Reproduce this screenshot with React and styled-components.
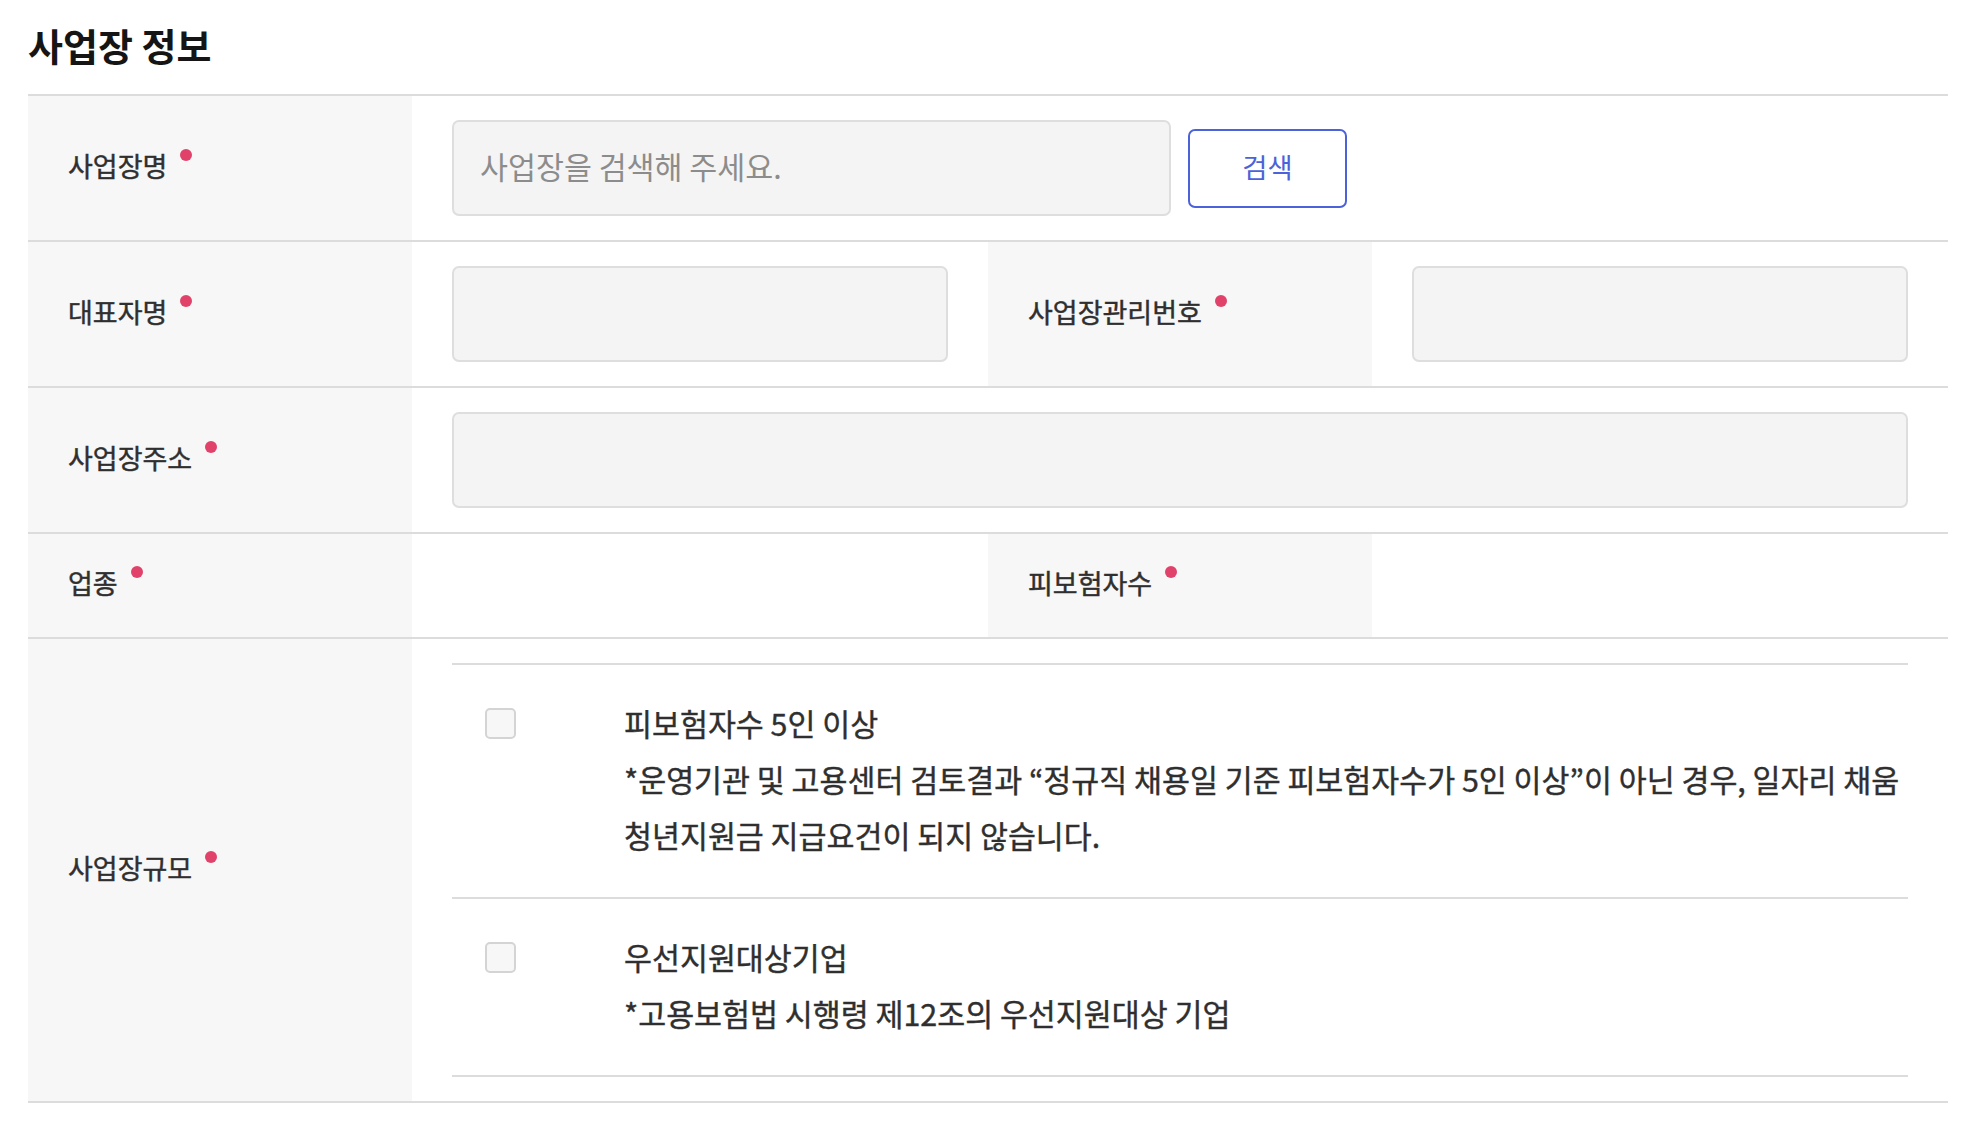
import React from "react";
import styled, { createGlobalStyle } from "styled-components";

const GlobalStyle = createGlobalStyle`
  * { box-sizing: border-box; }
  html, body { margin: 0; padding: 0; background: #ffffff; }
  body {
    font-family: "Noto Sans CJK KR", "Noto Sans", sans-serif;
    color: #333333;
    -webkit-font-smoothing: antialiased;
  }
`;

const Page = styled.div`
  padding: 0 22px 0 28px;
`;

const Title = styled.h2`
  margin: 0;
  padding-top: 21px;
  margin-bottom: 25px;
  font-size: 38px;
  line-height: 48px;
  font-weight: 700;
  color: #151515;
`;

const Table = styled.div`
  border-top: 2px solid #dcdcdc;
`;

const Row = styled.div`
  display: grid;
  grid-template-columns: 384px 1fr 384px 1fr;
  border-bottom: 2px solid #dcdcdc;
`;

const LabelCell = styled.div`
  background: #f7f7f7;
  padding: 29px 40px 35px;
  display: flex;
  align-items: center;
`;

const LabelText = styled.span`
  display: inline-flex;
  align-items: flex-start;
  font-size: 27px;
  line-height: 39px;
  font-weight: 400;
  color: #2f2f2f;
  -webkit-text-stroke: 0.45px #2f2f2f;
`;

const Required = styled.span`
  width: 12px;
  height: 12px;
  border-radius: 50%;
  background: #e0426a;
  margin-left: 13px;
  margin-top: 3px;
  flex: none;
`;

const ValueCell = styled.div`
  grid-column: ${(p) => (p.$span ? `span ${p.$span}` : "auto")};
  padding: 24px 40px;
  display: flex;
  align-items: center;
  gap: 17px;
`;

const TextInput = styled.input`
  display: block;
  width: ${(p) => p.$width || "100%"};
  height: 96px;
  padding: 0 26px 5px;
  background: #f4f4f4;
  border: 2px solid #dedede;
  border-radius: 7px;
  font-family: inherit;
  font-size: 30.4px;
  color: #333333;
  outline: none;
  &::placeholder {
    color: #8c8c8c;
  }
`;

const SearchButton = styled.button`
  width: 159px;
  height: 79px;
  flex: none;
  border: 2px solid #4c62da;
  border-radius: 7px;
  background: #ffffff;
  color: #4c62da;
  font-family: inherit;
  font-size: 27.4px;
  font-weight: 400;
  cursor: pointer;
  padding: 0 0 5px;
`;

const OptionList = styled.div`
  width: 100%;
  border-top: 2px solid #dcdcdc;
`;

const OptionItem = styled.div`
  display: grid;
  grid-template-columns: 31px 1fr;
  column-gap: 108px;
  padding: 30px 0 34px 33px;
  border-bottom: 2px solid #dcdcdc;
`;

const CheckBox = styled.span`
  display: block;
  width: 31px;
  height: 31px;
  margin-top: 13px;
  border: 2px solid #d4d4d4;
  border-radius: 5px;
  background: #f7f7f7;
`;

const OptionText = styled.div`
  font-size: 30.4px;
  line-height: 56px;
  font-weight: 400;
  color: #2f2f2f;
  -webkit-text-stroke: 0.4px #2f2f2f;
  word-break: keep-all;
`;

const OptionTitle = styled.div``;
const OptionDesc = styled.div``;

function Label({ children }) {
  return (
    <LabelCell>
      <LabelText>
        {children}
        <Required />
      </LabelText>
    </LabelCell>
  );
}

export default function App() {
  return (
    <>
      <GlobalStyle />
      <Page>
        <Title>사업장 정보</Title>
        <Table>
          <Row>
            <Label>사업장명</Label>
            <ValueCell $span={3}>
              <TextInput $width="719px" placeholder="사업장을 검색해 주세요." />
              <SearchButton type="button">검색</SearchButton>
            </ValueCell>
          </Row>
          <Row>
            <Label>대표자명</Label>
            <ValueCell>
              <TextInput />
            </ValueCell>
            <Label>사업장관리번호</Label>
            <ValueCell>
              <TextInput />
            </ValueCell>
          </Row>
          <Row>
            <Label>사업장주소</Label>
            <ValueCell $span={3}>
              <TextInput />
            </ValueCell>
          </Row>
          <Row>
            <Label>업종</Label>
            <ValueCell />
            <Label>피보험자수</Label>
            <ValueCell />
          </Row>
          <Row>
            <Label>사업장규모</Label>
            <ValueCell $span={3}>
              <OptionList>
                <OptionItem>
                  <CheckBox />
                  <OptionText>
                    <OptionTitle>피보험자수 5인 이상</OptionTitle>
                    <OptionDesc>
                      *운영기관 및 고용센터 검토결과 “정규직 채용일 기준 피보험자수가 5인 이상”이 아닌 경우, 일자리 채움 청년지원금 지급요건이 되지 않습니다.
                    </OptionDesc>
                  </OptionText>
                </OptionItem>
                <OptionItem>
                  <CheckBox />
                  <OptionText>
                    <OptionTitle>우선지원대상기업</OptionTitle>
                    <OptionDesc>*고용보험법 시행령 제12조의 우선지원대상 기업</OptionDesc>
                  </OptionText>
                </OptionItem>
              </OptionList>
            </ValueCell>
          </Row>
        </Table>
      </Page>
    </>
  );
}
